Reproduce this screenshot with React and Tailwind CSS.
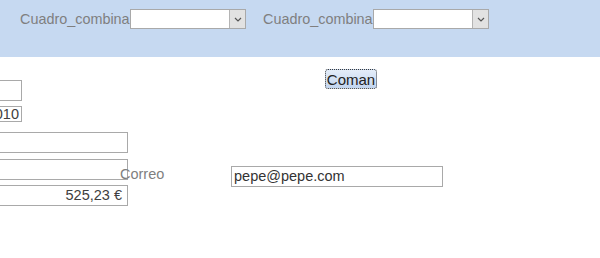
import React from 'react';

const font = { fontFamily: '"Liberation Sans", Arial, sans-serif' };

const Combo = () => (
  <div className="flex h-[20px] w-[116px] border border-[#a9a9a9] bg-white">
    <div className="flex-1" />
    <div className="flex w-[16px] items-center justify-center border-l border-[#b4b4b4] bg-[#e2e2e2]">
      <svg width="8" height="5" viewBox="0 0 8 5">
        <path d="M1 1 L4 4 L7 1" fill="none" stroke="#555" strokeWidth="1.2" />
      </svg>
    </div>
  </div>
);

const Box = ({ className = '', children }) => (
  <div
    className={`flex items-center justify-end border border-[#a9a9a9] bg-white text-[14.5px] leading-none text-[#404040] ${className}`}
  >
    {children}
  </div>
);

export default function App() {
  return (
    <div className="h-[258px] w-[600px] overflow-hidden bg-white" style={font}>
      <header className="flex h-[57px] items-start bg-[#c6d9f1] pl-[20px] pt-[9px]">
        <span className="mt-[1px] w-[110px] text-[14.4px] leading-[18px] text-[#7f7f7f]">Cuadro_combina</span>
        <Combo />
        <span className="ml-[17px] mt-[1px] w-[110px] text-[14.4px] leading-[18px] text-[#7f7f7f]">Cuadro_combina</span>
        <Combo />
      </header>

      <div className="flex">
        <div className="flex w-[120px] shrink-0 flex-col pt-[23px]">
          <Box className="ml-[-60px] h-[21px] w-[82px]" />
          <Box className="ml-[-60px] mt-[5px] h-[16px] w-[82px] pr-[2px]">2010</Box>
          <Box className="ml-[-20px] mt-[10px] h-[21px] w-[148px]" />
          <Box className="ml-[-20px] mt-[6px] h-[21px] w-[148px]" />
          <Box className="ml-[-20px] mt-[5px] h-[21px] w-[148px] pr-[5px]">525,23 €</Box>
        </div>

        <div className="flex flex-col pt-[12px]">
          <button className="ml-[205px] flex h-[20px] w-[52px] items-center justify-center rounded-[3px] border border-dotted border-[#3a3a3a] bg-gradient-to-b from-[#e4edf9] to-[#c2d5ef] text-[15px] leading-none text-[#222]">
            Coman
          </button>
          <div className="mt-[77px] flex items-center">
            <span className="w-[111px] pb-[4px] text-[14.5px] leading-none text-[#7f7f7f]">Correo</span>
            <div className="flex h-[21px] w-[212px] items-center border border-[#a9a9a9] bg-white pl-[2px] text-[14.5px] leading-none text-[#333]">
              pepe@pepe.com
            </div>
          </div>
        </div>
      </div>
    </div>
  );
}
